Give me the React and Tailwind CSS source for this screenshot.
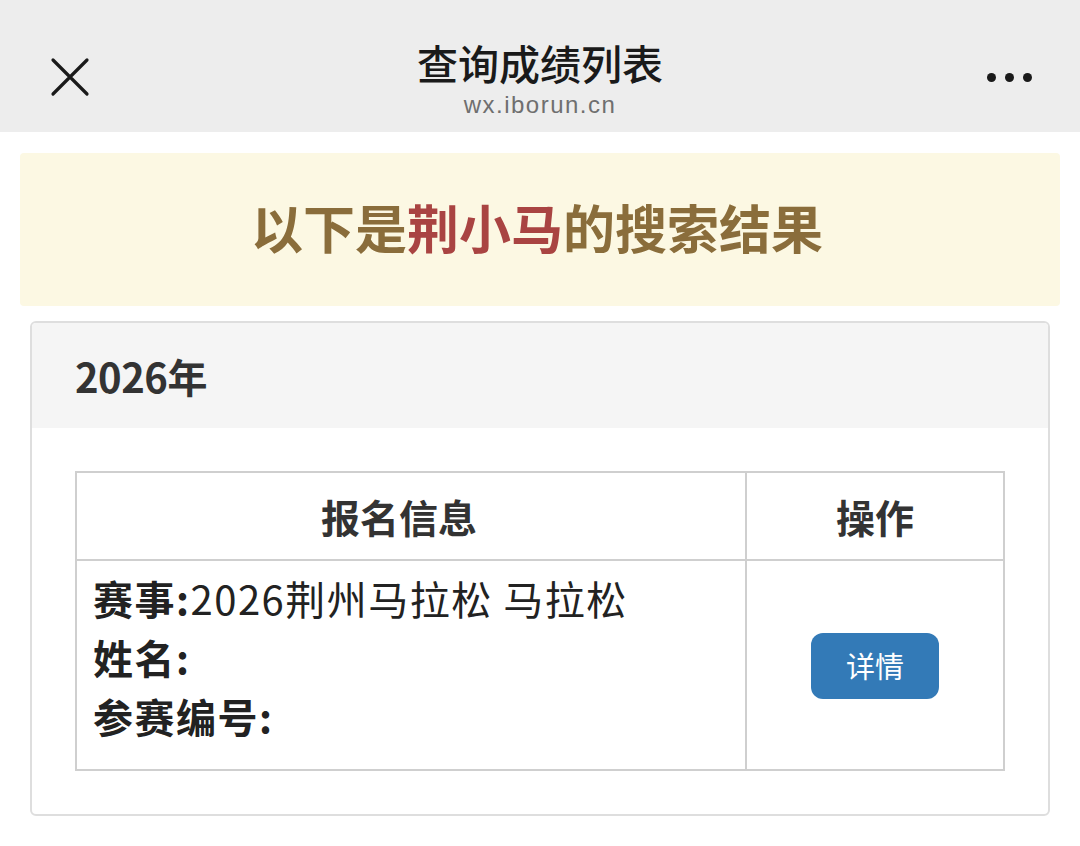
import React from 'react';

const font = { fontFamily: '"Noto Sans CJK SC", "Noto Sans", sans-serif' };

const App = () => {
  return (
    <div className="w-[1080px] h-[846px] bg-white overflow-hidden" style={font}>
      {/* top bar */}
      <div className="h-[132px] bg-[#ededed] flex items-center justify-between px-[50px] relative">
        <svg width="40" height="40" viewBox="0 0 40 40" className="mt-[22px] relative z-10">
          <path d="M3 3 L37 37 M37 3 L3 37" stroke="#1a1a1a" strokeWidth="3.2" strokeLinecap="round" />
        </svg>
        <div className="absolute left-0 right-0 top-[38px] flex flex-col items-center">
          <div className="text-[41px] leading-[48px] text-[#1a1a1a] font-medium">查询成绩列表</div>
          <div className="text-[24px] leading-[24px] text-[#6f6f6f] tracking-[1.5px] mt-[7px]" style={{ fontFamily: '"Liberation Sans", sans-serif' }}>wx.iborun.cn</div>
        </div>
        <div className="flex gap-[9px] mr-[-2px] mt-[22px] relative z-10">
          <span className="w-[9px] h-[9px] rounded-full bg-[#1a1a1a]" />
          <span className="w-[9px] h-[9px] rounded-full bg-[#1a1a1a]" />
          <span className="w-[9px] h-[9px] rounded-full bg-[#1a1a1a]" />
        </div>
      </div>

      <div className="px-[20px] pt-[21px]">
        {/* alert */}
        <div className="h-[153px] bg-[#fcf8e3] rounded-[4px] flex items-center justify-center">
          <div className="text-[52px] font-bold text-[#8a6d3b] mt-[-6px] ml-[-6px]">
            以下是<span className="text-[#a94442]">荆小马</span>的搜索结果
          </div>
        </div>

        {/* panel */}
        <div className="mx-[10px] mt-[15px] border-2 border-[#dedede] rounded-[6px] overflow-hidden">
          <div className="h-[105px] bg-[#f5f5f5] flex items-center px-[43px]">
            <span className="text-[40px] font-bold text-[#333] tracking-[-0.5px]">2026年</span>
          </div>
          <div className="px-[43px] pt-[43px] pb-[43px]">
            <table className="w-[930px] border-collapse border-2 border-[#cfcfcf]">
              <thead>
                <tr className="h-[88px]">
                  <th className="border-2 border-[#cfcfcf] text-[39px] font-bold text-[#333] w-[670px] pr-[24px]">报名信息</th>
                  <th className="border-2 border-[#cfcfcf] text-[39px] font-bold text-[#333]">操作</th>
                </tr>
              </thead>
              <tbody>
                <tr className="h-[210px]">
                  <td className="border-2 border-[#cfcfcf] align-top pl-[16px] pt-[8px] text-[40px] leading-[59px] text-[#222] tracking-[1.5px]">
                    <div><span className="font-semibold">赛事:</span>2026荆州马拉松 马拉松</div>
                    <div><span className="font-semibold">姓名:</span></div>
                    <div><span className="font-semibold">参赛编号:</span></div>
                  </td>
                  <td className="border-2 border-[#cfcfcf] text-center align-middle">
                    <button className="w-[128px] h-[66px] bg-[#337ab7] text-white text-[29px] rounded-[12px] mt-[2px]">详情</button>
                  </td>
                </tr>
              </tbody>
            </table>
          </div>
        </div>
      </div>
    </div>
  );
};

export default App;
